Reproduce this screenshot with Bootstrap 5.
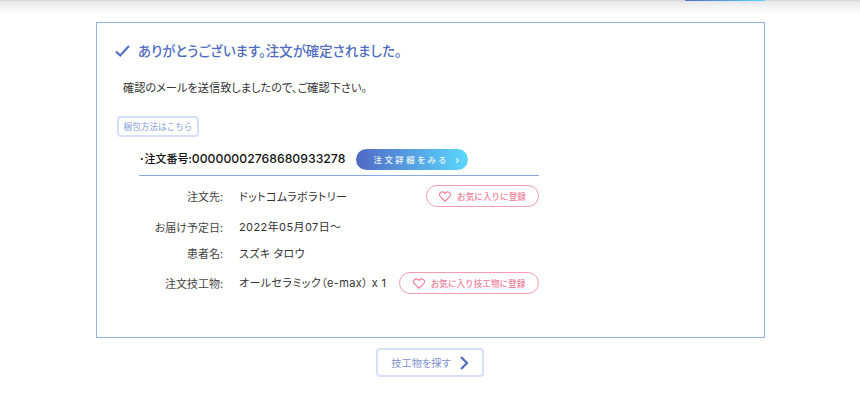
<!DOCTYPE html>
<html lang="ja">

<head>
    <meta charset="UTF-8">
    <title>注文確定</title>
    <link href="https://cdn.jsdelivr.net/npm/bootstrap@5.3.0/dist/css/bootstrap.min.css" rel="stylesheet">
    <style>
        body {
            font-family: "Noto Sans CJK JP", "Noto Sans", sans-serif;
            font-feature-settings: "palt";
            color: #333;
            background: #fff;
            height: 403px;
            overflow: hidden;
        }

        .top-shade {
            height: 22px;
            background: linear-gradient(#d4d4d4 0, #e9e9e9 2px, #f8f8f8 9px, #fff 16px);
        }

        .top-tab {
            width: 80px;
            height: 1px;
            margin-right: 95px;
            background: linear-gradient(90deg, #4f6cc4, #5cd6ff);
        }

        .done-box {
            width: 669px;
            height: 316px;
            margin-left: 96px;
            padding: 19px 16px 0 17px;
            border: 1px solid #8fb2ec;
        }

        .done-title {
            height: 17px;
            font-size: 13.4px;
            font-weight: 500;
            line-height: 17px;
            letter-spacing: 0.07px;
            color: #4f6cc0;
        }

        .done-title svg {
            margin-left: 1px;
        }

        .done-msg {
            margin: 20px 0 0 9px;
            font-size: 11.2px;
            line-height: 17px;
        }

        .pack-btn {
            width: 82px;
            height: 21px;
            margin: 20px 0 0 3px;
            padding: 0;
            font-size: 8.6px;
            line-height: 17px;
            color: #8b9fd8;
            background: #fff;
            border: 2px solid #d5dff5;
            border-radius: 4px;
        }

        .order-block {
            width: 400px;
            margin-left: 25px;
        }

        .order-head {
            height: 39px;
            padding-top: 7px;
            border-bottom: 1px solid #8aa8e0;
            font-weight: 700;
            color: #111;
        }

        .order-no {
            font-size: 11px;
            font-weight: 500;
            white-space: nowrap;
        }

        .order-digits {
            font-family: Inter, "Noto Sans CJK JP", sans-serif;
            font-size: 12.25px;
        }

        .detail-btn {
            width: 112px;
            height: 21px;
            margin-left: 11px;
            padding: 0 7px 0 17px;
            font-size: 8.4px;
            font-weight: 500;
            letter-spacing: 2.6px;
            color: #eef6ff;
            background: linear-gradient(90deg, #5069c4, #5ad8ff);
            border-radius: 11px;
        }

        .detail-arrow {
            font-size: 11px;
            font-weight: 700;
            line-height: 1;
            color: #fff;
        }

        .info-row {
            font-size: 11px;
            white-space: nowrap;
        }

        .info-label {
            width: 84px;
            color: #444;
            text-align: right;
        }

        .info-val {
            margin-left: 16px;
            letter-spacing: 0.4px;
        }

        .num-val {
            font-family: Inter, "Noto Sans CJK JP", sans-serif;
        }

        .first-row {
            margin-top: 9px;
        }

        .date-row {
            margin-top: 12px;
        }

        .name-row {
            margin-top: 9px;
        }

        .item-row {
            margin-top: 11px;
        }

        .fav-btn {
            height: 22px;
            gap: 6px;
            font-size: 8.6px;
            font-weight: 500;
            color: #f0819c;
            background: #fff;
            border: 1px solid #f59cb1;
            border-radius: 11px;
        }

        .fav-one {
            width: 113px;
        }

        .fav-two {
            width: 140px;
            margin-left: auto;
        }

        .find-btn {
            width: 108px;
            height: 29px;
            margin: 10px auto 0;
            font-size: 10.2px;
            color: #7f93d2;
            background: #fff;
            border: 2px solid #d5dff5;
            border-radius: 4px;
        }
    </style>
</head>

<body>
    <div class="top-shade d-flex justify-content-end align-items-start">
        <div class="top-tab"></div>
    </div>

    <div class="done-box">
        <div class="done-title d-flex align-items-center">
            <svg width="15" height="12" viewBox="0 0 15 12" fill="none" stroke="#4f6cc0" stroke-width="2"
                class="flex-shrink-0">
                <path d="M1 6.5 5.2 10.5 14 1" />
            </svg>
            <span class="ms-2">ありがとうございます。注文が確定されました。</span>
        </div>

        <p class="done-msg">確認のメールを送信致しましたので、ご確認下さい。</p>

        <button type="button" class="pack-btn d-block">梱包方法はこちら</button>

        <div class="order-block">
            <div class="order-head d-flex align-items-center">
                <span class="order-no">･注文番号:<span class="order-digits">00000002768680933278</span></span>
                <a class="detail-btn d-flex align-items-center justify-content-between text-decoration-none">
                    <span>注文詳細をみる</span><span class="detail-arrow">›</span>
                </a>
            </div>

            <!-- 注文の内容 -->
            <div class="info-row first-row d-flex align-items-center justify-content-between">
                <div class="d-flex">
                    <span class="info-label">注文先:</span>
                    <span class="info-val">ドットコムラボラトリー</span>
                </div>
                <button type="button" class="fav-btn fav-one d-flex align-items-center justify-content-center">
                    <svg width="12" height="11" viewBox="0 0 24 22" fill="none" stroke="#f0819c" stroke-width="2.4">
                        <path d="M12 20.5 2.8 11.2a5.6 5.6 0 0 1 0-7.8 5.4 5.4 0 0 1 7.7 0L12 5l1.5-1.6a5.4 5.4 0 0 1 7.7 0 5.6 5.6 0 0 1 0 7.8z" />
                    </svg>
                    お気に入りに登録
                </button>
            </div>
            <div class="info-row date-row d-flex">
                <span class="info-label">お届け予定日:</span>
                <span class="info-val num-val">2022年05月07日～</span>
            </div>
            <div class="info-row name-row d-flex">
                <span class="info-label">患者名:</span>
                <span class="info-val">スズキ タロウ</span>
            </div>
            <div class="info-row item-row d-flex align-items-center">
                <span class="info-label">注文技工物:</span>
                <span class="info-val num-val">オールセラミック（e-max） x 1</span>
                <button type="button" class="fav-btn fav-two d-flex align-items-center justify-content-center">
                    <svg width="12" height="11" viewBox="0 0 24 22" fill="none" stroke="#f0819c" stroke-width="2.4">
                        <path d="M12 20.5 2.8 11.2a5.6 5.6 0 0 1 0-7.8 5.4 5.4 0 0 1 7.7 0L12 5l1.5-1.6a5.4 5.4 0 0 1 7.7 0 5.6 5.6 0 0 1 0 7.8z" />
                    </svg>
                    お気に入り技工物に登録
                </button>
            </div>
        </div>
    </div>

    <a class="find-btn d-flex align-items-center justify-content-center gap-2 text-decoration-none">
        技工物を探す
        <svg width="10" height="14" viewBox="0 0 10 14" fill="none" stroke="#4f6cc0" stroke-width="2.2">
            <path d="M2 1 8 7 2 13" />
        </svg>
    </a>
</body>

</html>
